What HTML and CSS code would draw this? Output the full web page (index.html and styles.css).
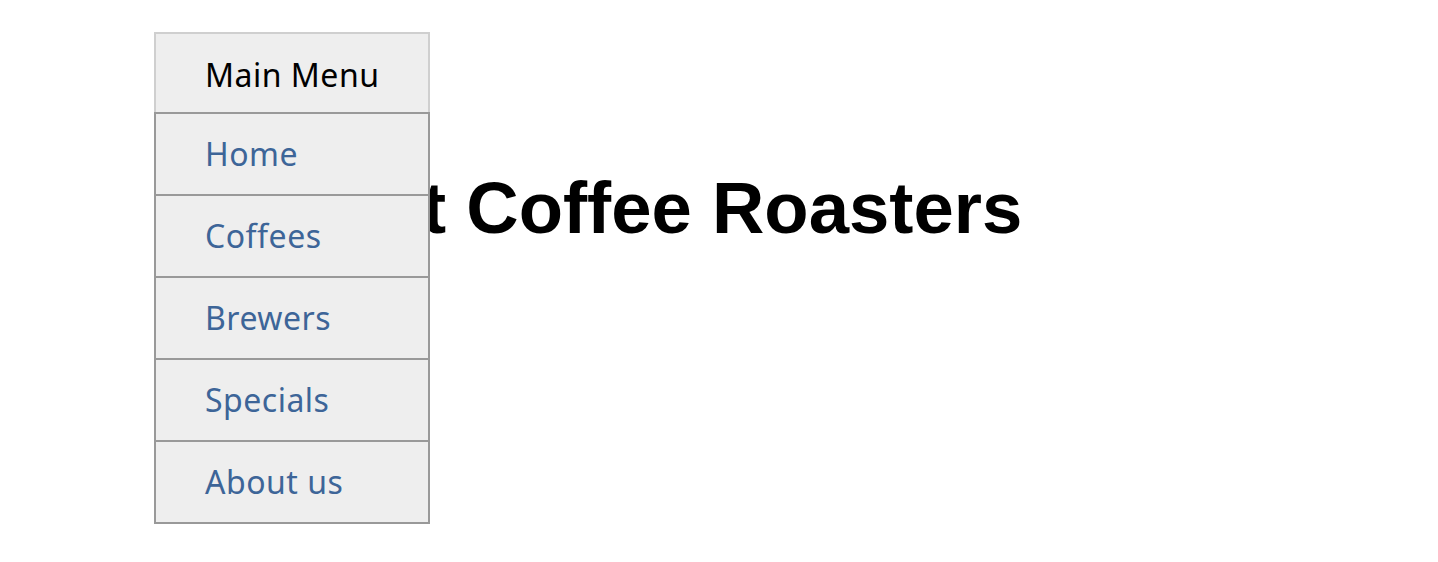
FILE: index.html
```html
<!DOCTYPE html>
<html lang="en">
<head>
<meta charset="utf-8">
<title>Best Coffee Roasters</title>
<link rel="stylesheet" href="styles.css">
</head>
<body>
<main class="page">
  <h1 class="title">Best Coffee Roasters</h1>
</main>
<nav class="menu">
  <div class="menu-head">Main Menu</div>
  <ul class="menu-list">
    <li class="menu-item"><a href="#">Home</a></li>
    <li class="menu-item"><a href="#">Coffees</a></li>
    <li class="menu-item"><a href="#">Brewers</a></li>
    <li class="menu-item"><a href="#">Specials</a></li>
    <li class="menu-item"><a href="#">About us</a></li>
  </ul>
</nav>
</body>
</html>
```

FILE: styles.css
```css
html, body {
  margin: 0;
  padding: 0;
  background: #fff;
}

.page {
  padding: 166px 0 0 289px;
}

.title {
  margin: 0;
  font-family: "Liberation Sans", Arial, sans-serif;
  font-weight: bold;
  font-size: 72.5px;
  color: #000;
}

.menu {
  position: absolute;
  left: 154px;
  top: 32px;
  width: 276px;
  font-family: "Noto Sans", "Noto Sans CJK JP", sans-serif;
  font-size: 32px;
  letter-spacing: 0.5px;
}

.menu-head {
  box-sizing: border-box;
  height: 80px;
  border: 2px solid #cfcfcf;
  border-bottom: none;
  background: #eeeeee;
  color: #000;
  line-height: 82px;
  padding-left: 49px;
}

.menu-list {
  list-style: none;
  margin: 0;
  padding: 0;
}

.menu-item {
  box-sizing: border-box;
  height: 82px;
  border: 2px solid #999;
  border-bottom: none;
  background: #eeeeee;
  line-height: 80px;
  padding-left: 49px;
}

.menu-item:last-child {
  height: 84px;
  border-bottom: 2px solid #999;
}

.menu-item a {
  color: #3d6598;
  text-decoration: none;
}
```
